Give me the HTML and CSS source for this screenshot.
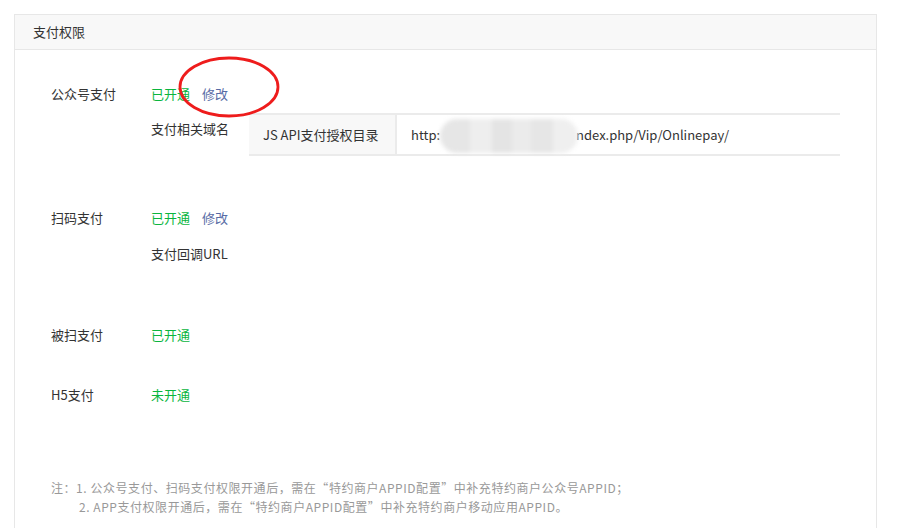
FILE: index.html
```html
<!DOCTYPE html>
<html lang="zh-CN">
<head>
    <meta charset="UTF-8">
    <title>支付权限</title>
    <link rel="stylesheet" href="styles.css">
</head>
<body>
    <div class="panel">
        <div class="panel-head">支付权限</div>
        <div class="panel-body">
            <div class="perm perm-jsapi">
                <div class="perm-label">公众号支付</div>
                <div class="perm-main">
                    <div class="perm-status">
                        <span class="on">已开通</span>
                        <a class="edit" href="#">修改</a>
                    </div>
                    <div class="perm-sub">
                        <div class="sub-label">支付相关域名</div>
                        <div class="domain-table">
                            <div class="cell cell-key">JS API支付授权目录</div>
                            <div class="cell cell-val">http:<span class="mosaic"></span>ndex.php/Vip/Onlinepay/</div>
                        </div>
                    </div>
                </div>
            </div>

            <div class="perm perm-native">
                <div class="perm-label">扫码支付</div>
                <div class="perm-main">
                    <div class="perm-status">
                        <span class="on">已开通</span>
                        <a class="edit" href="#">修改</a>
                    </div>
                    <div class="perm-sub perm-sub-url">
                        <div class="sub-label">支付回调URL</div>
                    </div>
                </div>
            </div>

            <div class="perm perm-micro">
                <div class="perm-label">被扫支付</div>
                <div class="perm-main">
                    <div class="perm-status"><span class="on">已开通</span></div>
                </div>
            </div>

            <div class="perm perm-h5">
                <div class="perm-label">H5支付</div>
                <div class="perm-main">
                    <div class="perm-status"><span class="on">未开通</span></div>
                </div>
            </div>

            <div class="note">
                <p>注：1. 公众号支付、扫码支付权限开通后，需在“特约商户APPID配置”中补充特约商户公众号APPID；</p>
                <p class="indent">2. APP支付权限开通后，需在“特约商户APPID配置”中补充特约商户移动应用APPID。</p>
            </div>
        </div>

        <!-- 标注圈 -->
        <svg class="mark" width="104" height="64" viewBox="0 0 104 64">
            <ellipse cx="52" cy="32" rx="49" ry="29" fill="none" stroke="#ee1c1c" stroke-width="2.8"/>
        </svg>
    </div>
</body>
</html>
```

FILE: styles.css
```css
html, body {
    height: 100%;
}

body {
    margin: 0;
    padding: 0;
    background: #fff;
    font-family: "Noto Sans CJK SC", "Noto Sans", sans-serif;
    font-size: 13px;
    color: #333;
    overflow: hidden;
}

.panel {
    position: relative;
    box-sizing: border-box;
    margin: 14px 0 0 14px;
    width: 863px;
    height: calc(100% - 14px);
    border: 1px solid #e7e7e7;
    border-bottom: none;
}

.panel-head {
    height: 34px;
    line-height: 34px;
    padding-left: 18px;
    background: #f8f8f8;
    border-bottom: 1px solid #e7e7e7;
}

.panel-body {
    padding: 34px 0 0 36px;
}

.perm {
    display: flex;
    line-height: 20px;
}

.perm-label {
    width: 100px;
    flex-shrink: 0;
}

.perm-main {
    flex: 1;
}

.perm-status .on {
    color: #0ab53e;
}

.perm-status .edit {
    margin-left: 9px;
    color: #576ba5;
    text-decoration: none;
}

.perm-sub {
    display: flex;
    margin-top: 9px;
}

.sub-label {
    width: 98px;
    padding-top: 6px;
}

.domain-table {
    display: flex;
    width: 591px;
    height: 39px;
    border-top: 2px solid #ebebeb;
    border-bottom: 2px solid #ebebeb;
}

.cell {
    line-height: 39px;
    padding-left: 14px;
    white-space: nowrap;
}

.cell-key {
    width: 132px;
    background: #f8f8f8;
    border-right: 2px solid #ebebeb;
}

.cell-val {
    flex: 1;
}

.mosaic {
    display: inline-block;
    width: 138px;
    height: 34px;
    margin-right: -2px;
    vertical-align: middle;
    border-radius: 17px;
    background:
        linear-gradient(90deg, #e6e6e6 0 22%, #eeeeee 22% 38%, #e4e4e4 38% 52%, #ebebeb 52% 66%, #e6e6e6 66% 82%, #efefef 82%);
    filter: blur(2px);
}

.perm-native {
    margin-top: 52px;
}

.perm-sub-url {
    margin-top: 16px;
}

.perm-sub-url .sub-label {
    padding-top: 0;
}

.perm-micro {
    margin-top: 61px;
}

.perm-h5 {
    margin-top: 40px;
}

.note {
    margin-top: 73px;
    font-size: 12px;
    line-height: 19px;
    letter-spacing: 0.55px;
    color: #999;
}

.note p {
    margin: 0;
    white-space: nowrap;
}

.note .indent {
    padding-left: 28px;
}

.mark {
    position: absolute;
    left: 162px;
    top: 40px;
}
```
